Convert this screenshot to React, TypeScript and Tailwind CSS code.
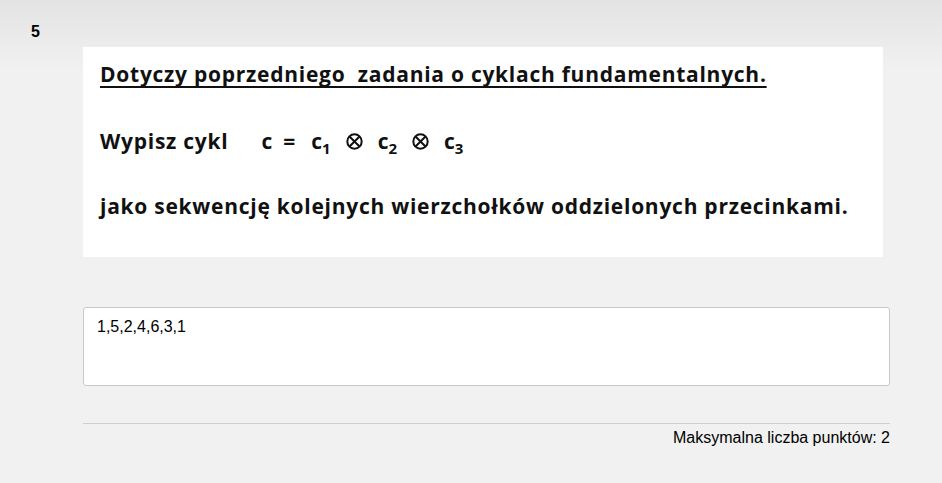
import React from "react";

function Sub({ children }: { children: React.ReactNode }) {
  return <span className="relative top-[5px] text-[15px] leading-none">{children}</span>;
}

function Otimes() {
  return (
    <svg viewBox="0 0 17 17" className="h-[17px] w-[17px] self-center translate-y-[1px]" fill="none" stroke="#111" strokeWidth="2">
      <circle cx="8.5" cy="8.5" r="7.2" />
      <path d="M3.5 3.5 L13.5 13.5 M13.5 3.5 L3.5 13.5" />
    </svg>
  );
}

export default function App() {
  return (
    <div className="min-h-[483px] w-full bg-[linear-gradient(#e3e3e3,#f1f1f1_70px)] font-['Liberation_Sans',Arial,sans-serif] text-black">
      <div className="flex">
        {/* question number */}
        <div className="w-[83px] shrink-0 pl-[31px] pt-[23px] text-[16px] font-bold leading-[18px]">5</div>

        <div className="w-[807px] shrink-0 pt-[47px]">
          {/* question image */}
          <div className="flex h-[210px] w-[800px] flex-col bg-white pl-[17px] pt-[13px] font-['Open_Sans',sans-serif] text-[21px] font-bold text-[#111] leading-[28px]">
            <div className="whitespace-pre underline decoration-2 underline-offset-[4px] [text-decoration-skip-ink:none] tracking-[0.74px]">
              Dotyczy poprzedniego  zadania o cyklach fundamentalnych.
            </div>
            <div className="mt-[39px] flex items-baseline whitespace-pre">
              <span className="tracking-[0.74px]">Wypisz cykl</span>
              <span className="ml-[33px]">c</span>
              <span className="ml-[11px]">=</span>
              <span className="ml-[16px]">c</span>
              <Sub>1</Sub>
              <span className="ml-[15px] flex"><Otimes /></span>
              <span className="ml-[15px]">c</span>
              <Sub>2</Sub>
              <span className="ml-[15px] flex"><Otimes /></span>
              <span className="ml-[15px]">c</span>
              <Sub>3</Sub>
            </div>
            <div className="mt-[37px] whitespace-pre tracking-[0.74px]">
              jako sekwencję kolejnych wierzchołków oddzielonych przecinkami.
            </div>
          </div>

          {/* answer field */}
          <div className="mt-[50px] h-[79px] w-[807px] rounded-[3px] border border-[#c9c9c9] bg-white px-[13px] pt-[10px] text-[16px] leading-[18px]">
            1,5,2,4,6,3,1
          </div>

          {/* footer */}
          <div className="mt-[37px] border-t border-[#cfcfcf] pt-[5px] text-right text-[16px] leading-[18px]">
            Maksymalna liczba punktów: 2
          </div>
        </div>
      </div>
    </div>
  );
}
